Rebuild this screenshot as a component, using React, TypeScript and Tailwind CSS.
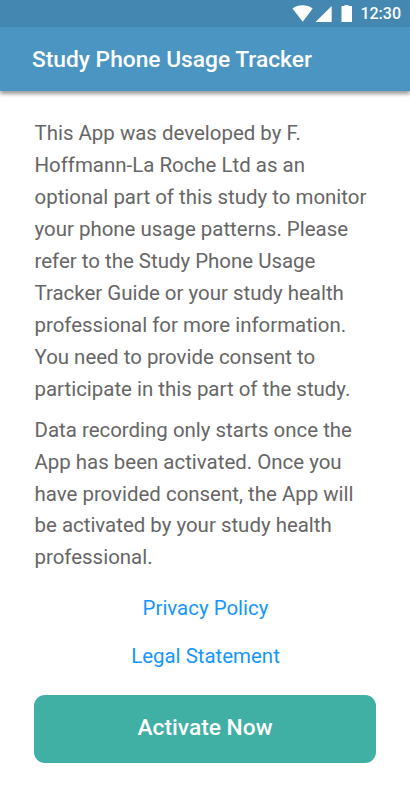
const intro = [
  'This App was developed by F.',
  'Hoffmann-La Roche Ltd as an',
  'optional part of this study to monitor',
  'your phone usage patterns. Please',
  'refer to the Study Phone Usage',
  'Tracker Guide or your study health',
  'professional for more information.',
  'You need to provide consent to',
  'participate in this part of the study.',
];

const recording = [
  'Data recording only starts once the',
  'App has been activated. Once you',
  'have provided consent, the App will',
  'be activated by your study health',
  'professional.',
];

function Paragraph({ lines }: { lines: string[] }) {
  return (
    <p>
      {lines.map((line) => (
        <span key={line} className="block whitespace-nowrap">{line}</span>
      ))}
    </p>
  );
}

function StatusBar() {
  return (
    <div className="flex h-[27px] items-center justify-end bg-[#4488b1] pr-[9px] text-white">
      <svg className="h-[27px] w-[68px]" viewBox="0 0 68 27" fill="currentColor">
        <path d="M0.500 8.500C6.500 4.300 14.700 4.300 20.700 8.500L10.700 21.800Z" />
        <path d="M39.700 6v16H23.500z" />
        <path d="M49.500 6h3V5h4v1H60v16H49.500z" />
      </svg>
      <span className="pt-px text-[16px] leading-none font-medium">12:30</span>
    </div>
  );
}

export default function App() {
  return (
    <div className="flex h-[800px] w-[410px] flex-col bg-white font-['Roboto',sans-serif]">
      <StatusBar />
      <header className="flex h-16 items-center bg-[#4b95c3] pt-0.5 pl-8 shadow-[0_3px_4px_rgba(0,0,0,0.4)]">
        <h1 className="text-[22.750px] font-medium text-white">Study Phone Usage Tracker</h1>
      </header>
      <main className="flex flex-col px-[34px] pt-[27.300px]">
        <div className="flex flex-col gap-[9.300px] pl-[0.500px] text-[20.450px] leading-[31.900px] text-[#666666]">
          <Paragraph lines={intro} />
          <Paragraph lines={recording} />
        </div>
        <nav className="mt-[9.800px] flex flex-col items-center pl-px text-[20.450px] leading-[48px] text-[#1496ff]">
          <a href="#privacy">Privacy Policy</a>
          <a href="#legal">Legal Statement</a>
        </nav>
        <button className="mt-[15px] h-[68px] w-[342px] rounded-[11px] bg-[#40afa4] pb-[3px] text-[22.750px] font-medium text-white">
          Activate Now
        </button>
      </main>
    </div>
  );
}
